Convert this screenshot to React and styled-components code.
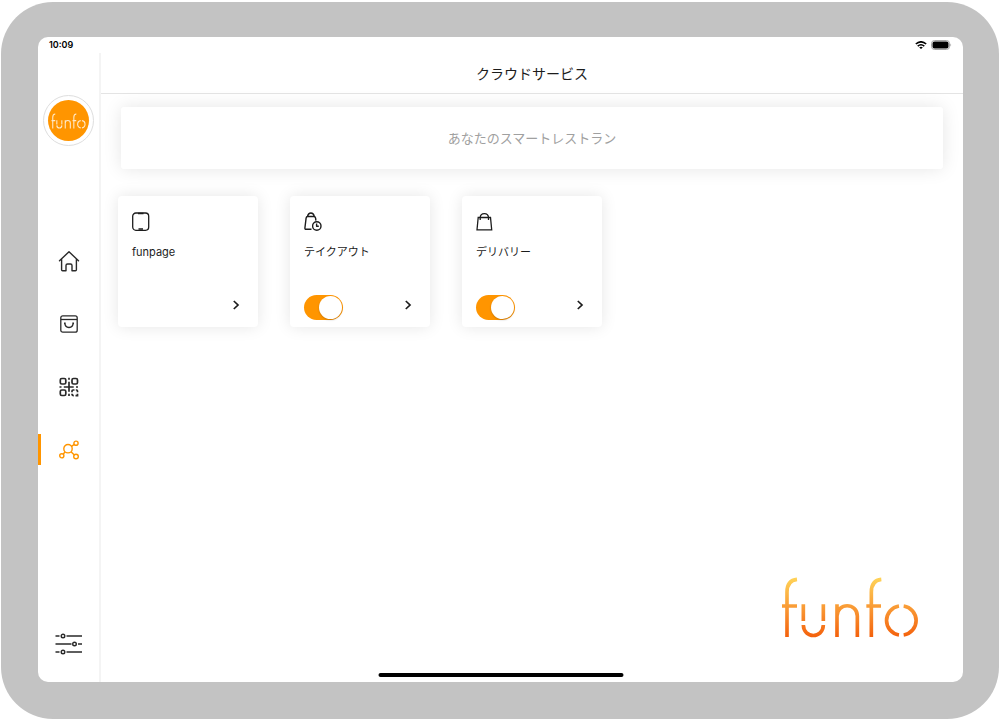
import React, { useId, useState } from "react";
import styled, { createGlobalStyle } from "styled-components";

const ORANGE = "#ff9500";

const GlobalStyle = createGlobalStyle`
  *, *::before, *::after { box-sizing: border-box; }
  body {
    margin: 0;
    background: #fff;
    color: #1c1c1c;
    font-family: Inter, "Noto Sans CJK JP", sans-serif;
  }
  button { border: 0; padding: 0; background: none; color: inherit; font: inherit; cursor: pointer; }
  svg { display: block; flex: none; }
`;

const Page = styled.div`
  display: flex;
  min-height: 100vh;
  padding: 2px 1px;
`;

const Device = styled.div`
  flex: 1;
  display: flex;
  padding: 35px 36px 37px 37px;
  border-radius: 52px;
  background: #c3c3c3;
`;

const Screen = styled.div`
  position: relative;
  flex: 1;
  display: flex;
  flex-direction: column;
  min-width: 0;
  border-radius: 10px;
  background: #fff;
  overflow: hidden;
`;

const StatusBar = styled.div`
  display: flex;
  align-items: center;
  justify-content: space-between;
  height: 16px;
  padding: 0 11px;
  color: #000;
  font-size: 9px;
  font-weight: 600;
  line-height: 16px;
`;

const StatusIcons = styled.div`
  display: flex;
  align-items: center;
  gap: 4px;
`;

const Body = styled.div`
  flex: 1;
  display: flex;
`;

const Sidebar = styled.aside`
  display: flex;
  flex-direction: column;
  align-items: center;
  width: 63px;
  padding: 42px 0 23px;
  border-right: 2px solid #f4f4f4;
`;

const Avatar = styled.a`
  display: grid;
  place-items: center;
  width: 51px;
  height: 51px;
  border: 1px solid #dedede;
  border-radius: 50%;
  &::before {
    content: "";
    grid-area: 1 / 1;
    width: 41px;
    height: 41px;
    border-radius: 50%;
    background: ${ORANGE};
  }
  svg { grid-area: 1 / 1; z-index: 1; }
`;

const Nav = styled.nav`
  display: flex;
  flex-direction: column;
  gap: 32px;
  width: 100%;
  margin-top: 99px;
`;

const NavItem = styled.button`
  display: grid;
  place-items: center;
  width: 100%;
  height: 31px;
  color: ${(p) => (p.$active ? ORANGE : "#2a2a2a")};
  box-shadow: ${(p) => (p.$active ? `inset 3px 0 ${ORANGE}` : "none")};
`;

const SettingsButton = styled(NavItem)`
  margin-top: auto;
`;

const Main = styled.main`
  flex: 1;
  display: flex;
  flex-direction: column;
  min-width: 0;
`;

const Header = styled.header`
  padding: 11px 0 9px;
  border-bottom: 1px solid #e4e4e4;
  text-align: center;
  h1 {
    margin: 0;
    font-size: 14px;
    font-weight: 400;
    line-height: 20px;
  }
`;

const Banner = styled.p`
  margin: 13px 20px 0;
  padding: 21px;
  border-radius: 3px;
  background: #fff;
  box-shadow: 0 0 18px rgba(0, 0, 0, 0.1);
  color: #a0a0a0;
  font-size: 13px;
  line-height: 20px;
  text-align: center;
`;

const Cards = styled.div`
  display: flex;
  flex-wrap: wrap;
  gap: 32px;
  margin-top: 27px;
  padding: 0 17px;
`;

const Card = styled.section`
  display: flex;
  flex-direction: column;
  width: 140px;
  height: 131px;
  padding: 16px 14px 7px;
  border-radius: 4px;
  background: #fff;
  box-shadow: 0 0 16px rgba(0, 0, 0, 0.1);
`;

const CardTitle = styled.h2`
  margin: 12px 0 0;
  font-size: 11px;
  font-weight: 400;
  line-height: 16px;
`;

const CardFooter = styled.div`
  display: flex;
  align-items: flex-start;
  height: 25px;
  margin-top: auto;
`;

const OpenButton = styled.button`
  display: grid;
  place-items: center;
  width: 16px;
  height: 20px;
  margin-left: auto;
`;

const Toggle = styled.input`
  appearance: none;
  width: 39px;
  height: 25px;
  margin: 0;
  padding: 1px;
  border-radius: 13px;
  background: ${(p) => (p.checked ? ORANGE : "#dcdcdc")};
  cursor: pointer;
  &::before {
    content: "";
    display: block;
    width: 23px;
    height: 23px;
    margin-left: ${(p) => (p.checked ? "14px" : "0")};
    border-radius: 50%;
    background: #fff;
    box-shadow: 0 1px 2px rgba(0, 0, 0, 0.2);
  }
`;

const Brand = styled.footer`
  display: flex;
  justify-content: flex-end;
  margin-top: auto;
  padding: 0 43px 43px;
`;

const HomeIndicator = styled.div`
  position: absolute;
  bottom: 5px;
  left: 50%;
  width: 245px;
  height: 4px;
  border-radius: 2px;
  background: #000;
  transform: translateX(-50%);
`;

function Wordmark({ width, height, color, stroke }) {
  const id = useId();
  return (
    <svg width={width} height={height} viewBox="60 48 420 189" fill="none" role="img" aria-label="funfo">
      <defs>
        <linearGradient id={id} gradientUnits="userSpaceOnUse" x1="0" y1="55" x2="0" y2="231">
          <stop offset="0" stopColor="#ffd257" />
          <stop offset="0.5" stopColor="#f99a35" />
          <stop offset="1" stopColor="#f4610c" />
        </linearGradient>
      </defs>
      <g stroke={color || `url(#${id})`} strokeWidth={stroke}>
        <path d="M81 231V96C81 73 92 60 111 58M66 138H111" />
        <path d="M130 133V183M190 133V183M130 195C131 237 189 237 190 195" />
        <path d="M231 133V231M231 168C231 127 292 127 292 168V231" />
        <path d="M334 231V96C334 73 345 60 364 58M319 138H363" />
        <path d="M417 138A44 44 0 0 0 417 225M431 138A44 44 0 0 1 431 225" />
      </g>
    </svg>
  );
}

const line = { fill: "none", stroke: "currentColor" };

const WifiIcon = () => (
  <svg width="12" height="8" viewBox="0 0 12 8" {...line} strokeWidth="1.6">
    <path d="M.8 3Q6-1.4 11.2 3M2.7 5.1Q6 2.400 9.3 5.1" />
    <path d="M4.2 6.4Q6 5.1 7.8 6.400L6 8Z" fill="currentColor" stroke="none" />
  </svg>
);

const BatteryIcon = () => (
  <svg width="21" height="10" viewBox="0 0 21 10">
    <rect x=".5" y=".5" width="18" height="9" rx="3" fill="#fff" stroke="#a5a5a5" />
    <rect x="1.500" y="1.500" width="16" height="7" rx="2" />
    <path d="M19.4 3.3Q21 5 19.4 6.7Z" fill="#999" />
  </svg>
);

const HomeIcon = () => (
  <svg width="22" height="22" viewBox="0 0 22 22" {...line} strokeWidth="1.4" strokeLinejoin="round" strokeLinecap="round">
    <path d="M1.5 10.7 11 1.8l9.500 8.900M3.600 9.200V19.700Q3.600 20.700 4.600 20.700H8V15.500Q8 14 9.500 14H12.500Q14 14 14 15.500V20.700H17.400Q18.400 20.700 18.400 19.700V9.200" />
  </svg>
);

const OrderIcon = () => (
  <svg width="18" height="18" viewBox="0 0 18 18" {...line} strokeWidth="1.3">
    <rect x=".8" y=".8" width="16.400" height="16.400" rx="2" />
    <path d="M1 4.500H17" />
    <path d="M4.800 7.800C5 14 13 14 13.200 7.800M4 8.200H5.700M12.300 8.200H14" strokeWidth="1.400" />
  </svg>
);

const QrIcon = () => (
  <svg width="20" height="20" viewBox="0 0 20 20" {...line} strokeWidth="1.700">
    <rect x="1.300" y="1.500" width="5.500" height="5.500" rx="1.500" />
    <rect x="13" y="1.500" width="5.500" height="5.500" rx="1.500" />
    <rect x="1.300" y="13" width="5.500" height="5.500" rx="1.500" />
    <path d="M10 .8V2.800M10 4.800V14.700M10 16.800V19M.5 10H2.500M4.800 10H14.700M17 10H19M15.500 13H14Q13 13 13 14V15.200M16.800 13H17.500Q18.500 13 18.500 14V15.200M13 16.700Q13 18.600 14.800 18.600M16.500 18.600H18.500V16.700" />
  </svg>
);

const HubIcon = () => (
  <svg width="20" height="20" viewBox="0 0 20 20" {...line} strokeWidth="1.400">
    <circle cx="9" cy="8.700" r="4.200" />
    <circle cx="17" cy="3.200" r="2.100" />
    <circle cx="2.800" cy="15.800" r="2.100" />
    <circle cx="17" cy="16.500" r="2.300" />
    <path d="M12.500 6.400 15.300 4.400M6.100 11.800 4.200 14.200M12 11.700 15.300 15" />
  </svg>
);

const SlidersIcon = () => (
  <svg width="28" height="22" viewBox="0 0 28 22" {...line} strokeWidth="1.400">
    <path d="M.5 3H4.500M11.500 3H27M.5 11H16.500M23 11H27M.5 19H4.500M11.500 19H27" />
    <circle cx="8" cy="3" r="1.800" />
    <circle cx="19.500" cy="11" r="1.800" />
    <circle cx="8" cy="19" r="1.800" />
  </svg>
);

const TabletIcon = () => (
  <svg width="20" height="20" viewBox="0 0 20 20" {...line} strokeWidth="1.300">
    <rect x=".7" y="1" width="16" height="17.300" rx="3.200" />
    <path d="M6 1.600H11.500M6.500 17H11" strokeWidth="1.500" />
  </svg>
);

const TakeoutIcon = () => (
  <svg width="20" height="20" viewBox="0 0 20 20" {...line} strokeWidth="1.400" strokeLinejoin="round">
    <path d="M7.500 17.300H2Q.8 17.300 .9 16L2.100 6.200Q2.300 4.500 3.800 4.500H9.800Q11.300 4.500 11.600 6.200L11.900 8.600" />
    <path d="M3.500 4.300C4.500-.2 9.300-.2 10.300 4.300" />
    <circle cx="12.800" cy="14" r="4.200" />
    <path d="M12.600 11.600V14.300H14.800" />
  </svg>
);

const DeliveryIcon = () => (
  <svg width="20" height="20" viewBox="0 0 20 20" {...line} strokeWidth="1.300">
    <path d="M2.200 5.500H14.500L15.700 17.800H1Z" />
    <path d="M4.200 8V5.500C4.500.2 12.200.2 12.500 5.500V8" />
  </svg>
);

const ChevronIcon = () => (
  <svg width="8" height="12" viewBox="0 0 8 12" {...line} strokeWidth="1.700">
    <path d="M1.800 2 6 6 1.800 10" />
  </svg>
);

const services = [
  { name: "funpage", Icon: TabletIcon, toggle: false },
  { name: "テイクアウト", Icon: TakeoutIcon, toggle: true },
  { name: "デリバリー", Icon: DeliveryIcon, toggle: true },
];

const navItems = [
  { label: "ホーム", Icon: HomeIcon },
  { label: "注文", Icon: OrderIcon },
  { label: "QRコード", Icon: QrIcon },
  { label: "クラウドサービス", Icon: HubIcon, active: true },
];

function ServiceCard({ name, Icon, toggle }) {
  const [on, setOn] = useState(true);
  return (
    <Card>
      <Icon />
      <CardTitle>{name}</CardTitle>
      <CardFooter>
        {toggle && (
          <Toggle type="checkbox" role="switch" aria-label={name} checked={on} onChange={(e) => setOn(e.target.checked)} />
        )}
        <OpenButton aria-label={`${name}を開く`}>
          <ChevronIcon />
        </OpenButton>
      </CardFooter>
    </Card>
  );
}

export default function App() {
  return (
    <Page>
      <GlobalStyle />
      <Device>
        <Screen>
          <StatusBar>
            <time>10:09</time>
            <StatusIcons>
              <WifiIcon />
              <BatteryIcon />
            </StatusIcons>
          </StatusBar>
          <Body>
            <Sidebar>
              <Avatar href="#">
                <Wordmark width={35} height={16} color="#ffe9c8" stroke={13} />
              </Avatar>
              <Nav>
                {navItems.map(({ label, Icon, active }) => (
                  <NavItem key={label} aria-label={label} $active={active}>
                    <Icon />
                  </NavItem>
                ))}
              </Nav>
              <SettingsButton aria-label="設定">
                <SlidersIcon />
              </SettingsButton>
            </Sidebar>
            <Main>
              <Header>
                <h1>クラウドサービス</h1>
              </Header>
              <Banner>あなたのスマートレストラン</Banner>
              <Cards>
                {services.map((s) => (
                  <ServiceCard key={s.name} {...s} />
                ))}
              </Cards>
              <Brand>
                <Wordmark width={140} height={63} stroke={11} />
              </Brand>
            </Main>
          </Body>
          <HomeIndicator />
        </Screen>
      </Device>
    </Page>
  );
}
